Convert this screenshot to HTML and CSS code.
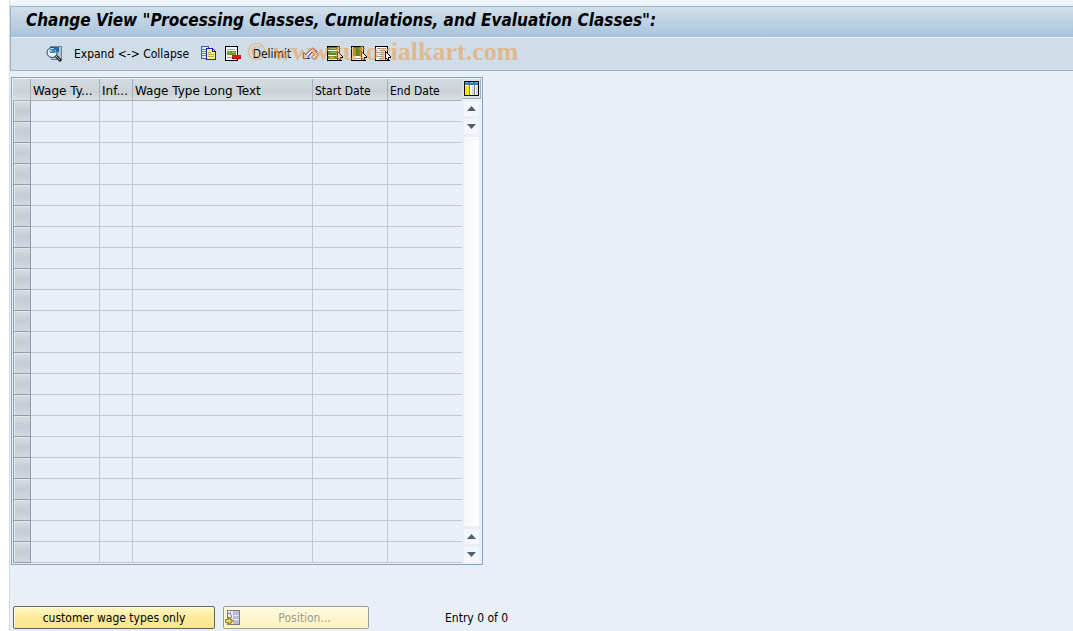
FILE: index.html
```
<!DOCTYPE html>
<html lang="en">
<head>
    <meta charset="utf-8" />
    <title>Change View</title>
    <link rel="stylesheet" href="styles.css">
</head>
<body>
    <div class="window">
        <header class="head">
            <h1 class="title">Change View "Processing Classes, Cumulations, and Evaluation Classes":</h1>
            <div class="toolbar">
                <button type="button" class="tool" aria-label="Details">
                    <svg class="icon" viewBox="0 0 16 16">
                        <path fill="#6f8497" d="M4 0h12v14H5V2H4z" />
                        <path fill="#a9c3d8" d="M5 1h10v12H5z" />
                        <path fill="#1d70b8" d="M5 1h8v5H5z" />
                        <circle cx="6" cy="6.500" r="5" fill="#e4f2fa" stroke="#2b3946" />
                        <path fill="#2689d8" d="M4 3h5l1 3-1 1H4z" />
                        <path fill="#8cc4ee" d="M3 4h3v2H3z" />
                        <path fill="#fff" d="M3 7h5v2H3z" />
                        <path d="M10 10l5 5" stroke="#101820" stroke-width="3" />
                        <path d="M10 10l4 4" stroke="#b8c4ce" />
                    </svg>
                </button>
                <button type="button" class="tool expand">Expand &lt;-&gt; Collapse</button>
                <button type="button" class="tool" aria-label="Copy as">
                    <svg class="icon" viewBox="0 0 16 16" shape-rendering="crispEdges">
                        <path fill="#4a58a8" d="M0 0h8v2h1v11H0z" />
                        <path fill="#dce8f4" d="M1 1h6v11H1z" />
                        <path fill="#6c7fc0" d="M1 3h4v1H1zM1 5h4v1H1zM1 7h4v1H1zM1 9h4v1H1z" />
                        <path fill="#17259c" d="M5 2h7v1h1v1h1v1h1v9H5z" />
                        <path fill="#fff27a" d="M6 3h5v3h3v7H6z" />
                        <path fill="#fff" d="M12 4h1v1h-1z" />
                        <path fill="#b4ae50" d="M7 6h3v1H7zM7 8h6v1H7zM7 10h6v1H7z" />
                    </svg>
                </button>
                <button type="button" class="tool" aria-label="Delete">
                    <svg class="icon" viewBox="0 0 16 16" shape-rendering="crispEdges">
                        <path fill="#000" d="M0 0h13v15H0z" />
                        <path fill="#f4f7fa" d="M1 1h11v13H1z" />
                        <path fill="#9aa9b5" d="M2 3h8v1H2zM2 11h6v1H2z" />
                        <path fill="#6d9a28" d="M2 5h9v4H2z" />
                        <path fill="#a3c65c" d="M3 6h2v1H3zM7 6h3v1H7z" />
                        <path fill="#f01010" d="M7 9h9v4H7z" />
                        <path fill="#a00000" d="M7 12h9v1H7z" />
                    </svg>
                </button>
                <button type="button" class="tool delimit">Delimit</button>
                <button type="button" class="tool" aria-label="Undo change">
                    <svg class="icon" viewBox="0 0 16 16">
                        <path d="M.5 6.500v6h6L5 10.500 9 6l3 3 2-3.500L9.500 2 3 8.500z" fill="#eef3f8" stroke="#23237f" />
                        <path d="M9.500 2L15.500 8.500 11 13.500 8.500 11 11.500 8.500 9 6" fill="#f4e6e6" stroke="#a44848" />
                    </svg>
                </button>
                <button type="button" class="tool" aria-label="Select all">
                    <svg class="icon" viewBox="0 0 16 16" shape-rendering="crispEdges">
                        <path fill="#000" d="M0 0h13v15H0z" />
                        <path fill="#fff" d="M1 1h11v13H1z" />
                        <path fill="#5d8810" d="M1 1h10v3H1zM1 5h10v4H1zM1 10h10v3H1z" />
                        <path fill="#a3c070" d="M3 2h6v1H3zM3 6h6v1H3zM3 11h5v1H3z" />
                        <path fill="#000" d="M10 5h1l5 6v1h-2l1 3h-2l-1-2-2 1z" />
                        <path fill="#fff" d="M11 7l4 4h-2v2h-1v-1h-1z" />
                    </svg>
                </button>
                <button type="button" class="tool" aria-label="Select block">
                    <svg class="icon" viewBox="0 0 16 16" shape-rendering="crispEdges">
                        <path fill="#000" d="M0 0h13v15H0z" />
                        <path fill="#fff" d="M1 1h11v13H1z" />
                        <path fill="#5d8810" d="M2 1h9v9H2z" />
                        <path fill="#9aa9b5" d="M2 12h7v1H2z" />
                        <path fill="#000" d="M10 5h1l5 6v1h-2l1 3h-2l-1-2-2 1z" />
                        <path fill="#fff" d="M11 7l4 4h-2v2h-1v-1h-1z" />
                    </svg>
                </button>
                <button type="button" class="tool" aria-label="Deselect all">
                    <svg class="icon" viewBox="0 0 16 16" shape-rendering="crispEdges">
                        <path fill="#000" d="M0 0h13v15H0z" />
                        <path fill="#f8fafc" d="M1 1h11v13H1z" />
                        <path fill="#8d9ba8" d="M2 2h9v1H2zM4 4h7v1H4zM2 6h7v1H2zM4 8h5v1H4zM2 10h7v1H2zM4 12h5v1H4z" />
                        <path fill="#000" d="M10 5h1l5 6v1h-2l1 3h-2l-1-2-2 1z" />
                        <path fill="#fff" d="M11 7l4 4h-2v2h-1v-1h-1z" />
                    </svg>
                </button>
                <span class="watermark">© www.tutorialkart.com</span>
            </div>
        </header>

        <main class="content">
            <div class="grid">
                <table class="entries">
                    <colgroup>
                        <col class="c-sel"><col class="c-type"><col class="c-inf"><col class="c-text"><col class="c-start"><col class="c-end">
                    </colgroup>
                    <thead>
                        <tr><th></th><th class="wide">Wage Ty...</th><th class="wide">Inf...</th><th class="wide">Wage Type Long Text</th><th>Start Date</th><th>End Date</th></tr>
                    </thead>
                    <tbody>
                        <tr><th></th><td></td><td></td><td></td><td></td><td></td></tr>
                        <tr><th></th><td></td><td></td><td></td><td></td><td></td></tr>
                        <tr><th></th><td></td><td></td><td></td><td></td><td></td></tr>
                        <tr><th></th><td></td><td></td><td></td><td></td><td></td></tr>
                        <tr><th></th><td></td><td></td><td></td><td></td><td></td></tr>
                        <tr><th></th><td></td><td></td><td></td><td></td><td></td></tr>
                        <tr><th></th><td></td><td></td><td></td><td></td><td></td></tr>
                        <tr><th></th><td></td><td></td><td></td><td></td><td></td></tr>
                        <tr><th></th><td></td><td></td><td></td><td></td><td></td></tr>
                        <tr><th></th><td></td><td></td><td></td><td></td><td></td></tr>
                        <tr><th></th><td></td><td></td><td></td><td></td><td></td></tr>
                        <tr><th></th><td></td><td></td><td></td><td></td><td></td></tr>
                        <tr><th></th><td></td><td></td><td></td><td></td><td></td></tr>
                        <tr><th></th><td></td><td></td><td></td><td></td><td></td></tr>
                        <tr><th></th><td></td><td></td><td></td><td></td><td></td></tr>
                        <tr><th></th><td></td><td></td><td></td><td></td><td></td></tr>
                        <tr><th></th><td></td><td></td><td></td><td></td><td></td></tr>
                        <tr><th></th><td></td><td></td><td></td><td></td><td></td></tr>
                        <tr><th></th><td></td><td></td><td></td><td></td><td></td></tr>
                        <tr><th></th><td></td><td></td><td></td><td></td><td></td></tr>
                        <tr><th></th><td></td><td></td><td></td><td></td><td></td></tr>
                        <tr><th></th><td></td><td></td><td></td><td></td><td></td></tr>
                    </tbody>
                </table>
                <div class="side">
                    <button type="button" class="config" aria-label="Configuration">
                        <svg class="config-icon" viewBox="0 0 15 15" shape-rendering="crispEdges">
                            <path fill="#000" d="M0 0h15v15H0z" />
                            <path fill="#fff" d="M1 1h13v13H1z" />
                            <path fill="#2f78b8" d="M1 1h13v3H1z" />
                            <path fill="#7db4dc" d="M1 1h3v1H1zM6 1h3v1H6zM11 1h3v1h-3z" />
                            <path fill="#ffe600" d="M1 5h4v9H1z" />
                            <path fill="#d5dade" d="M8 5h2v9H8zM12 5h2v9h-2z" />
                            <path fill="#76828c" d="M5 4h1v10H5zM10 4h1v10h-1z" />
                        </svg>
                    </button>
                    <div class="scroll">
                        <button type="button" class="arrow" aria-label="Scroll to top"><svg class="tri" viewBox="0 0 9 5"><path d="M0 5L4.500 0 9 5z" /></svg></button>
                        <button type="button" class="arrow" aria-label="Next row"><svg class="tri" viewBox="0 0 9 5"><path d="M0 0h9L4.500 5z" /></svg></button>
                        <div class="track"></div>
                        <button type="button" class="arrow" aria-label="Previous row"><svg class="tri" viewBox="0 0 9 5"><path d="M0 5L4.500 0 9 5z" /></svg></button>
                        <button type="button" class="arrow" aria-label="Scroll to bottom"><svg class="tri" viewBox="0 0 9 5"><path d="M0 0h9L4.500 5z" /></svg></button>
                    </div>
                </div>
            </div>

            <div class="actions">
                <button type="button" class="btn btn-customer">customer wage types only</button>
                <button type="button" class="btn btn-position" disabled>
                    <svg class="icon" viewBox="0 0 16 16" shape-rendering="crispEdges">
                        <path fill="#77798c" d="M2 0h13v15H2z" />
                        <path fill="#e8e9ee" d="M3 1h5v13H3z" />
                        <path fill="#b9bbd2" d="M8 1h6v13H8z" />
                        <path fill="#e8e9ee" d="M9 5h5v1H9zM9 9h5v1H9z" />
                        <path fill="#8b8da0" d="M3 3h3v1H3zM5 2h1v3H5zM3 7h4v1H3zM6 5h1v3H6z" />
                        <path fill="#a28b2c" d="M0 9h3V7h1l4 4-4 4H3v-2H0z" />
                        <path fill="#f4d94f" d="M1 10h3V9l3 2-3 2v-1H1z" />
                    </svg>
                    <span class="btn-label">Position...</span>
                </button>
                <span class="entry">Entry 0 of 0</span>
            </div>
        </main>
    </div>
</body>
</html>
```
FILE: styles.css
```
* {
    box-sizing: border-box;
}

body {
    margin: 0;
    background: #fff;
    font-family: "DejaVu Sans Condensed", "DejaVu Sans", sans-serif;
    font-size: 12px;
    color: #000;
}

button {
    font: inherit;
    color: inherit;
    padding: 0;
    margin: 0;
    border: 0;
    background: none;
}

svg {
    display: block;
}

.window {
    min-height: 100vh;
    margin-left: 9px;
    padding-top: 6px;
    border-left: 1px solid #d3dce8;
    background: linear-gradient(#f5f8fb, #e8eff6 6px);
}

/* title and toolbar */
.head {
    border: 1px solid #9fb4c8;
    border-right: 0;
    background: #cfdde8;
}

.title {
    margin: 0;
    height: 30px;
    padding-left: 15px;
    font-size: 17px;
    font-style: italic;
    line-height: 27px;
    white-space: nowrap;
    background: linear-gradient(#d0e0ec, #a9c2da);
}

.toolbar {
    position: relative;
    display: flex;
    align-items: center;
    gap: 8px;
    height: 33px;
    padding-left: 35px;
    border-top: 1px solid #e8f1f8;
}

.tool {
    white-space: nowrap;
}

.expand {
    width: 123px;
}

.delimit {
    width: 46px;
}

.icon {
    width: 16px;
    height: 16px;
}

.watermark {
    position: absolute;
    left: 236px;
    top: 0;
    font-family: "Liberation Serif", serif;
    font-size: 26px;
    font-weight: bold;
    line-height: 28px;
    color: #f0a050;
    opacity: .6;
    white-space: nowrap;
    pointer-events: none;
}

/* table control */
.content {
    padding: 6px 1px 0;
}

.grid {
    display: inline-flex;
    padding: 1px;
    border: 1px solid #86a6c6;
    vertical-align: top;
}

.entries {
    width: 449px;
    table-layout: fixed;
    border-collapse: separate;
    border-spacing: 0;
}

.c-sel {
    width: 18px;
}

.c-type {
    width: 69px;
}

.c-inf {
    width: 33px;
}

.c-text {
    width: 180px;
}

.c-start {
    width: 75px;
}

.entries th,
.entries td {
    height: 21px;
    padding: 0;
    border-right: 1px solid #bfc8d6;
    border-bottom: 1px solid #bfc8d6;
}

.entries thead th {
    height: 22px;
    padding: 2px 0 0 2px;
    border-color: #a6b0b8;
    background: linear-gradient(#d3dce2, #cbd1d7 60%, #d9dfe3);
    font-weight: normal;
    text-align: left;
    white-space: nowrap;
}

.entries .wide {
    font-family: "DejaVu Sans", sans-serif;
}

.entries tbody th {
    border: 1px solid #929daa;
    border-top: 0;
    background: linear-gradient(#d7dde1, #c7cbd4 50%, #d3d8de);
    box-shadow: inset 1px 1px #e4e9ed;
}

.entries td:last-child,
.entries thead th:last-child {
    border-right: 0;
}

.side {
    display: flex;
    flex-direction: column;
    width: 19px;
}

.config {
    width: 19px;
    height: 20px;
    padding: 1px;
    border-right: 1px solid #a3adb7;
    border-bottom: 1px solid #a3adb7;
    background: #dce2e7;
}

.config-icon {
    width: 15px;
    height: 15px;
    margin: auto;
}

.scroll {
    display: flex;
    flex: 1;
    flex-direction: column;
    gap: 3px;
    width: 15px;
    margin: 2px 0 1px 2px;
}

.arrow {
    display: flex;
    align-items: center;
    justify-content: center;
    height: 15px;
    background: #f3f6fb;
}

.tri {
    width: 9px;
    height: 5px;
    fill: #4f606e;
}

.track {
    flex: 1;
    background: linear-gradient(90deg, #f4f6fa, #fff);
}

/* bottom buttons */
.actions {
    display: flex;
    align-items: center;
    margin: 41px 0 0 2px;
    padding-bottom: 2px;
}

.btn {
    height: 23px;
    border: 1px solid #62666a;
    border-radius: 2px;
    background: linear-gradient(#fff8c8, #fdea9a 50%, #fbe68f);
    box-shadow: inset 1px 1px #fffbe0;
}

.btn-customer {
    width: 202px;
}

.btn-position {
    display: flex;
    align-items: center;
    width: 146px;
    margin-left: 8px;
    padding-left: 1px;
    border-color: #9d9e98;
    background: linear-gradient(#fffbe0, #fdf3bd);
    color: #9a9a90;
}

.btn-label {
    flex: 1;
    text-align: center;
}

.entry {
    margin-left: 76px;
}
```
